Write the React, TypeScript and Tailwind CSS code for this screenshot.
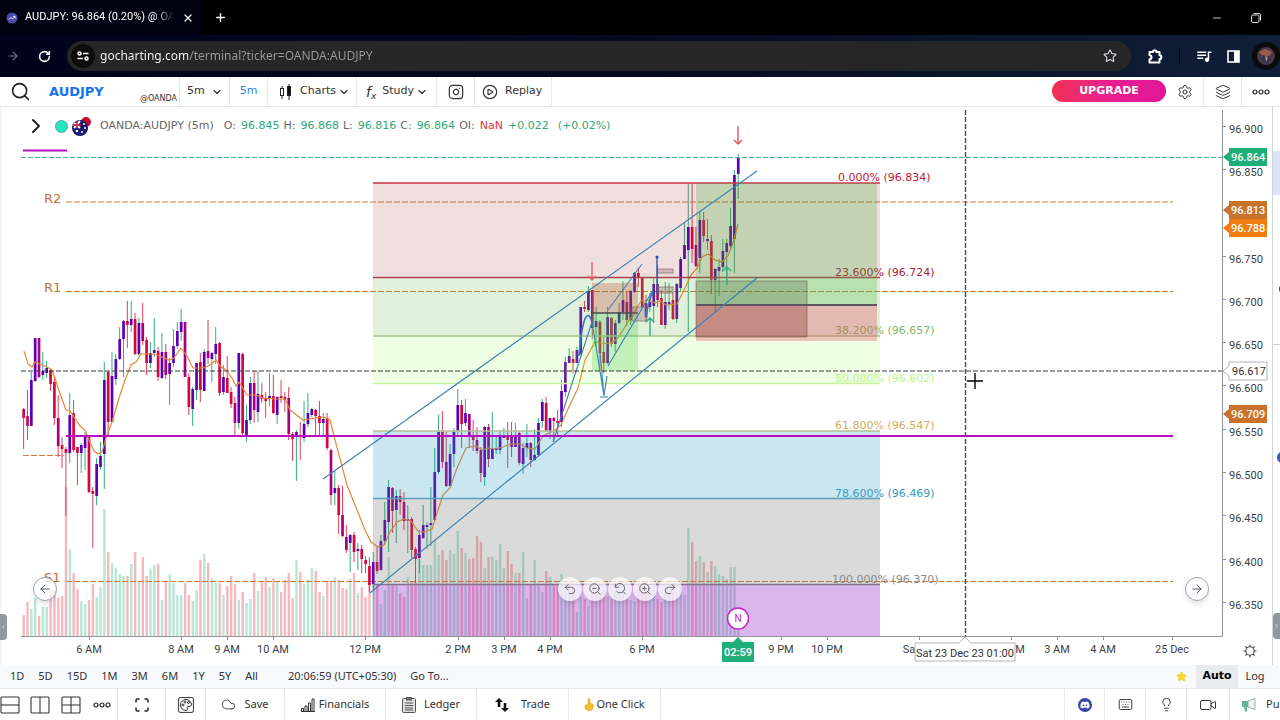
import {
  ArrowLeft,
  ArrowRight,
  ChevronDown,
  ChevronLeft,
  ChevronRight,
  CirclePlay,
  Cloud,
  Instagram,
  Keyboard,
  Layers,
  Lightbulb,
  Minus,
  Plus,
  Redo2,
  RotateCw,
  Search,
  Settings,
  Star,
  Undo2,
  Video,
  X,
  ZoomIn,
  ZoomOut,
} from "lucide-react";
import { FaDiscord } from "react-icons/fa";
import { MdQueueMusic } from "react-icons/md";

// kind, body top, body bottom, high, low, volume top
// u = up candle, d = down candle, m = weak down candle
type Candle = [string, number, number, number, number, number];

const candles: Candle[] = [
  ["d", 409, 418, 408, 449, 615], ["d", 416, 426, 390, 440, 602], ["u", 380, 426, 372, 426, 609],
  ["u", 338, 381, 338, 382, 598], ["m", 338, 377, 338, 378, 616], ["u", 371, 375, 352, 380, 607],
  ["u", 368, 373, 361, 378, 607], ["d", 370, 384, 369, 391, 590], ["d", 382, 418, 377, 425, 590],
  ["m", 418, 446, 395, 457, 598], ["d", 445, 449, 437, 468, 596], ["d", 449, 453, 447, 516, 487],
  ["u", 415, 453, 393, 463, 549], ["d", 413, 450, 400, 452, 573], ["d", 447, 453, 447, 485, 589],
  ["u", 445, 453, 443, 473, 601], ["u", 437, 448, 432, 470, 604], ["d", 435, 492, 435, 493, 600],
  ["d", 491, 494, 487, 548, 584], ["u", 464, 496, 458, 505, 597], ["u", 456, 467, 442, 470, 587],
  ["u", 380, 454, 362, 489, 509], ["d", 372, 422, 371, 435, 552], ["u", 376, 422, 352, 422, 563],
  ["u", 359, 379, 354, 385, 568], ["u", 339, 359, 327, 360, 574], ["u", 321, 339, 320, 377, 576],
  ["d", 321, 325, 301, 348, 576], ["u", 319, 325, 301, 332, 564], ["d", 319, 354, 313, 355, 552],
  ["u", 323, 354, 318, 356, 582], ["m", 323, 341, 303, 345, 557], ["d", 340, 363, 337, 375, 576],
  ["u", 353, 363, 342, 368, 569], ["u", 350, 353, 318, 357, 565], ["d", 351, 377, 347, 381, 564],
  ["u", 352, 378, 333, 379, 600], ["m", 352, 375, 344, 379, 581], ["u", 363, 374, 358, 405, 574],
  ["u", 346, 363, 329, 367, 583], ["u", 331, 346, 322, 349, 595], ["u", 322, 332, 309, 341, 595],
  ["m", 322, 377, 322, 377, 583], ["d", 377, 407, 373, 415, 595], ["u", 389, 409, 387, 426, 601],
  ["u", 363, 390, 363, 400, 590], ["d", 362, 390, 353, 402, 560], ["u", 352, 391, 349, 391, 554],
  ["m", 351, 358, 320, 364, 563], ["u", 353, 359, 352, 382, 578], ["u", 344, 354, 327, 364, 583],
  ["d", 343, 393, 342, 396, 583], ["u", 377, 392, 365, 395, 595], ["d", 378, 393, 356, 393, 586],
  ["d", 392, 404, 387, 408, 576], ["m", 403, 423, 397, 435, 584], ["u", 353, 423, 353, 429, 600],
  ["d", 354, 433, 353, 435, 592], ["u", 420, 436, 405, 442, 603], ["u", 383, 420, 377, 424, 599],
  ["m", 383, 410, 371, 423, 573], ["u", 394, 412, 371, 422, 591], ["d", 395, 399, 383, 403, 582],
  ["d", 398, 401, 392, 418, 577], ["u", 396, 398, 373, 406, 587], ["d", 396, 413, 375, 414, 578],
  ["u", 397, 415, 396, 424, 581], ["d", 396, 398, 380, 403, 592], ["d", 397, 400, 392, 412, 580],
  ["m", 398, 434, 387, 440, 573], ["d", 434, 439, 432, 461, 598], ["u", 432, 437, 430, 481, 560],
  ["d", 435, 437, 422, 460, 572], ["u", 424, 438, 401, 442, 584], ["u", 413, 424, 393, 427, 580],
  ["u", 409, 415, 408, 417, 568], ["d", 410, 416, 409, 435, 571], ["d", 416, 423, 401, 435, 592],
  ["u", 419, 423, 413, 437, 596], ["d", 418, 448, 413, 450, 581], ["m", 450, 495, 449, 505, 581],
  ["u", 488, 493, 470, 505, 577], ["d", 488, 515, 485, 534, 580], ["m", 515, 536, 486, 537, 588],
  ["m", 537, 550, 525, 553, 589], ["u", 535, 543, 534, 572, 579], ["d", 535, 552, 532, 562, 573],
  ["u", 549, 551, 543, 570, 593], ["d", 549, 559, 545, 573, 587], ["d", 560, 564, 556, 573, 597],
  ["d", 566, 585, 557, 592, 580], ["u", 562, 584, 552, 589, 583], ["d", 562, 571, 547, 574, 584],
  ["u", 541, 570, 535, 571, 604], ["u", 520, 541, 502, 545, 590], ["u", 487, 522, 480, 552, 557],
  ["m", 488, 511, 487, 533, 584], ["u", 496, 510, 490, 543, 584], ["d", 496, 502, 489, 515, 593],
  ["m", 502, 521, 492, 530, 597], ["u", 519, 521, 505, 553, 577], ["d", 519, 550, 517, 558, 582],
  ["d", 549, 559, 547, 583, 582], ["u", 535, 558, 530, 573, 560], ["u", 525, 538, 505, 539, 565],
  ["u", 525, 527, 522, 549, 565], ["u", 523, 525, 487, 546, 565], ["u", 472, 520, 448, 521, 540],
  ["u", 432, 472, 415, 474, 555], ["d", 432, 462, 411, 468, 550], ["m", 462, 486, 432, 487, 560],
  ["u", 454, 486, 444, 487, 550], ["u", 432, 454, 428, 467, 554], ["u", 405, 431, 389, 437, 531],
  ["d", 405, 424, 400, 448, 548], ["u", 413, 423, 399, 426, 553], ["m", 414, 437, 414, 447, 559],
  ["d", 437, 440, 420, 451, 558], ["m", 440, 451, 427, 454, 536], ["m", 450, 473, 447, 482, 542],
  ["u", 427, 477, 426, 486, 568], ["m", 427, 459, 424, 467, 557], ["u", 449, 459, 412, 459, 557],
  ["u", 448, 450, 437, 454, 560], ["u", 437, 450, 431, 454, 544], ["u", 436, 438, 428, 438, 568],
  ["d", 436, 440, 422, 468, 551], ["m", 436, 447, 422, 457, 564], ["u", 436, 447, 423, 447, 573],
  ["m", 433, 463, 432, 465, 573], ["u", 448, 464, 443, 474, 552], ["u", 443, 448, 424, 457, 598],
  ["m", 443, 460, 442, 467, 584], ["u", 455, 460, 429, 461, 560], ["u", 423, 455, 418, 456, 583],
  ["u", 402, 421, 399, 428, 592], ["d", 403, 431, 397, 432, 571], ["u", 418, 432, 418, 439, 577],
  ["d", 418, 421, 417, 442, 585], ["d", 421, 423, 410, 435, 585], ["u", 391, 422, 380, 427, 574],
  ["u", 362, 392, 357, 397, 585], ["u", 356, 363, 348, 363, 587], ["d", 359, 363, 351, 373, 588],
  ["u", 350, 363, 347, 363, 612], ["u", 307, 354, 307, 355, 597], ["d", 307, 309, 301, 312, 599],
  ["u", 291, 310, 286, 312, 606], ["m", 290, 328, 290, 339, 590], ["u", 321, 327, 307, 347, 590],
  ["d", 322, 353, 320, 370, 593], ["d", 352, 363, 337, 373, 590], ["u", 317, 363, 307, 364, 597],
  ["d", 318, 344, 317, 347, 599], ["u", 323, 344, 320, 352, 590], ["u", 312, 323, 303, 324, 590],
  ["u", 300, 312, 281, 320, 590], ["m", 302, 320, 292, 326, 599], ["u", 291, 320, 290, 325, 600],
  ["u", 273, 292, 272, 293, 601], ["d", 273, 278, 268, 287, 590], ["d", 277, 307, 277, 308, 588],
  ["m", 303, 317, 295, 322, 590], ["u", 302, 307, 293, 312, 590], ["u", 284, 306, 277, 323, 590],
  ["m", 284, 300, 265, 307, 599], ["d", 298, 325, 290, 325, 602], ["u", 302, 325, 282, 329, 590],
  ["u", 302, 304, 283, 310, 590], ["d", 300, 319, 292, 320, 592], ["u", 284, 319, 283, 323, 593],
  ["u", 259, 288, 257, 292, 587], ["u", 245, 259, 223, 259, 595], ["u", 227, 250, 184, 332, 528],
  ["d", 227, 249, 184, 263, 542], ["m", 245, 266, 227, 267, 561], ["u", 220, 258, 211, 273, 556],
  ["d", 220, 236, 212, 242, 562], ["u", 239, 241, 219, 250, 572], ["d", 241, 280, 235, 294, 561],
  ["u", 269, 280, 268, 312, 566], ["u", 267, 271, 259, 296, 574], ["u", 251, 267, 239, 272, 576],
  ["u", 243, 252, 239, 284, 579], ["u", 226, 246, 208, 249, 567], ["u", 175, 239, 170, 273, 567],
  ["u", 157, 174, 154, 199, 620],
];

const average =
  "24,351 28,364 32,367 35,362 40,364 47,367 52,370 55,378 58,388 66,410 70,411 76,420 80,426 85,430 89,440 94,451 98,454 102,452 106,438 112,422 120,395 125,380 131,365 136,362 141,354 151,354 157,355 162,357 169,360 174,358 181,348 187,356 193,368 204,368 210,365 216,360 220,366 226,370 232,378 236,386 239,382 247,395 256,395 263,398 275,399 285,399 290,410 303,420 315,418 324,417 330,420 335,440 347,485 357,510 365,530 371,542 378,547 384,545 390,532 397,522 404,519 411,521 418,531 424,532 432,529 438,510 443,495 450,488 457,468 466,448 476,446 482,450 488,448 495,449 503,447 510,444 520,444 527,448 535,449 543,436 555,430 561,425 568,409 578,388 585,360 595,342 601,343 610,344 618,338 626,325 633,315 641,301 648,300 655,303 660,301 666,305 677,304 685,288 691,275 697,268 702,257 708,254 715,260 722,262 728,256 734,240 738,224";

const bodyColor: Record<string, string> = { u: "#5b00b5", d: "#d4083f", m: "#a8007c" };

const prices = [
  { y: 129, label: "96.900" },
  { y: 172, label: "96.850" },
  { y: 259, label: "96.750" },
  { y: 302, label: "96.700" },
  { y: 345, label: "96.650" },
  { y: 388, label: "96.600" },
  { y: 432, label: "96.550" },
  { y: 475, label: "96.500" },
  { y: 518, label: "96.450" },
  { y: 562, label: "96.400" },
  { y: 605, label: "96.350" },
];

// labelX is set where the hover date leaves only part of a label showing
const times = [
  { x: 89, label: "6 AM" },
  { x: 181, label: "8 AM" },
  { x: 227, label: "9 AM" },
  { x: 273, label: "10 AM" },
  { x: 365, label: "12 PM" },
  { x: 458, label: "2 PM" },
  { x: 504, label: "3 PM" },
  { x: 550, label: "4 PM" },
  { x: 642, label: "6 PM" },
  { x: 781, label: "9 PM" },
  { x: 827, label: "10 PM" },
  { x: 919, label: "Sa", labelX: 909 },
  { x: 1011, label: "M", labelX: 1020 },
  { x: 1057, label: "3 AM" },
  { x: 1103, label: "4 AM" },
  { x: 1172, label: "25 Dec" },
];

const fibs = [
  { y: 183, x: 838, text: "0.000% (96.834)", color: "#c01838", line: "#c83048" },
  { y: 277.5, x: 835, text: "23.600% (96.724)", color: "#a3263a", line: "#b04050" },
  { y: 336, x: 835, text: "38.200% (96.657)", color: "#86b568", line: "#a3c490" },
  { y: 383.5, x: 835, text: "50.000% (96.602)", color: "#bdf58a", line: "#c4f59a" },
  { y: 431, x: 835, text: "61.800% (96.547)", color: "#cfae5e", line: "#b9bf94" },
  { y: 498.5, x: 835, text: "78.600% (96.469)", color: "#3a98c4", line: "#5aa0c0" },
  { y: 584.5, x: 832, text: "100.000% (96.370)", color: "#8b8b8b", line: "#86708e" },
];

const tags = [
  { y: 157, label: "96.864", fill: "#1eae78" },
  { y: 210, label: "96.813", fill: "#c9722c" },
  { y: 228, label: "96.788", fill: "#f07c12" },
  { y: 414, label: "96.709", fill: "#c9722c" },
];

function Arrow({ x, y, dir, color }: { x: number; y: number; dir: number; color: string }) {
  return (
    <path
      d={`M${x} ${y} V${y - 18 * dir} M${x - 4} ${y - 4 * dir} L${x} ${y} L${x + 4} ${y - 4 * dir}`}
      fill="none"
      stroke={color}
      strokeWidth="1.4"
    />
  );
}

function Chart() {
  return (
    <svg viewBox="0 107 1272 558" className="block h-auto w-full font-['Roboto',sans-serif]">
      {/* volume */}
      {candles.map((c, i) => (
        <rect
          key={i}
          x={22.5 + i * 3.842}
          y={c[5]}
          width="2.4"
          height={636 - c[5]}
          fill={c[0] === "u" ? "#b9e6d4" : "#f6b8be"}
        />
      ))}
      <path d="M66 202H1173M66 291.5H1173M66 581.5H1173M23 455.5H64" stroke="#d07a3a" strokeWidth="1.2" strokeDasharray="6 2" />
      <g fontSize="13" fill="#bf7238" className="font-['DejaVu_Sans',sans-serif]">
        <text x="44" y="203">R2</text>
        <text x="44" y="292">R1</text>
        <text x="44" y="582">S1</text>
      </g>

      {/* candles */}
      {candles.map(([kind, top, bottom, high, low], i) => {
        const x = 23.6 + i * 3.842;
        return (
          <g key={i}>
            <rect x={x - 0.5} y={high} width="1" height={low - high} fill={kind === "u" ? "#35ae82" : "#e0405a"} />
            <rect x={x - 1.3} y={top} width="2.7" height={bottom - top} fill={bodyColor[kind]} />
          </g>
        );
      })}
      <polyline points={average} fill="none" stroke="#e58a3a" strokeWidth="1.2" />

      {/* fib zones */}
      <rect x="373" y="183" width="507" height="94" fill="#a02830" fillOpacity="0.15" />
      <rect x="373" y="277" width="507" height="59" fill="#60b040" fillOpacity="0.19" />
      <rect x="373" y="336" width="507" height="47" fill="#90ff40" fillOpacity="0.14" />
      <rect x="373" y="431" width="507" height="67" fill="#2098c0" fillOpacity="0.24" />
      <rect x="373" y="498" width="507" height="86" fill="#707070" fillOpacity="0.26" />
      <rect x="373" y="584" width="507" height="52" fill="#9020c8" fillOpacity="0.33" />
      {fibs.map((f) => (
        <g key={f.text}>
          <path d={`M373 ${f.y}H880`} stroke={f.line} strokeWidth="1.3" />
          <text x={f.x} y={Math.round(f.y) - 2} fontSize="11" fill={f.color} className="font-['DejaVu_Sans',sans-serif]">
            {f.text}
          </text>
        </g>
      ))}

      {/* long position boxes */}
      <rect x="592" y="283" width="46" height="30" fill="#c04030" fillOpacity="0.28" />
      <rect x="592" y="313" width="46" height="58" fill="#30c030" fillOpacity="0.24" />
      <path d="M592 313H638" stroke="#4a4a55" strokeWidth="1.6" />
      <rect x="696" y="183" width="181" height="122" fill="#40b030" fillOpacity="0.25" />
      <rect x="696" y="305" width="181" height="36" fill="#e84050" fillOpacity="0.3" />
      <rect x="696" y="281" width="111" height="24" fill="#4a5c3c" fillOpacity="0.27" />
      <rect x="696" y="305" width="111" height="32" fill="#8a2828" fillOpacity="0.32" />
      <rect x="696" y="281" width="111" height="56" fill="none" stroke="#604a4a" strokeOpacity="0.5" />
      <path d="M696 305H877" stroke="#5c5460" strokeWidth="2" />
      <g fill="#906060" fillOpacity="0.3" stroke="#806a6a" strokeOpacity="0.7">
        <rect x="657" y="269" width="16" height="4" />
        <rect x="657" y="287" width="16" height="6" />
        <rect x="632" y="307" width="15" height="14" />
      </g>

      {/* trend lines */}
      <g fill="none" stroke="#3d82b0" strokeWidth="1.1">
        <path d="M323 479L757 171M370 593L757 278" />
        <path d="M553 442L592 322L604 396L607 376M600 397H608M604 396L599 340M608 310L642 264M608 366L653 290" />
        <path d="M579 356C582 320 587 306 592 322M646 316C648 306 650 296 653 292" stroke="#3576d0" strokeWidth="1.6" />
      </g>
      <path d="M657 256V294" stroke="#2855a8" strokeWidth="1.3" />
      <circle cx="657" cy="257" r="1.6" fill="#2855a8" />
      <Arrow x={738} y={144} dir={1} color="#e25560" />
      <Arrow x={592} y={280} dir={1} color="#e86068" />
      <Arrow x={650} y={318} dir={-1} color="#2fae8c" />
      <Arrow x={727} y={267} dir={-1} color="#2fb888" />

      <path d="M66 436H1173M23 150.5H67" stroke="#b80ec0" strokeWidth="2" />
      <path d="M21 157.5H1223" stroke="#48b58c" strokeWidth="1.2" strokeDasharray="5 2" />
      <path d="M21 371H1223" stroke="#3c3c3c" strokeWidth="1.2" strokeDasharray="5 2" />
      <path d="M965.5 110V636" stroke="#4a4a4a" strokeWidth="1.4" strokeDasharray="5 2" />

      {/* axes */}
      <path d="M21 636.5H1222.5V110" fill="none" stroke="#8e9398" />
      <g fontSize="11" fill="#3c3f44">
        {prices.map((p) => (
          <g key={p.label}>
            <path d={`M1222 ${p.y - 2.5}h4`} stroke="#8e9398" />
            <text x="1229" y={p.y + 4}>{p.label}</text>
          </g>
        ))}
        {times.map((t) => (
          <g key={t.x}>
            <path d={`M${t.x + 0.5} 636v4`} stroke="#8e9398" />
            <text x={t.labelX ?? t.x} y="653" textAnchor="middle">{t.label}</text>
          </g>
        ))}
      </g>
      {tags.map((t) => (
        <g key={t.label}>
          <path d={`M1223 ${t.y}l6 -5v-4h38v18h-38v-4z`} fill={t.fill} />
          <text x="1231" y={t.y + 4} fontSize="11" fontWeight="500" fill="#fff">{t.label}</text>
        </g>
      ))}
      <path d="M1223 371l6 -5v-4h38v18h-38v-4z" fill="#fff" stroke="#b4b4b4" />
      <text x="1232" y="375" fontSize="11" fill="#333">96.617</text>

      <path d="M738 637l5 5h11v20h-32v-20h11z" fill="#1eae78" />
      <text x="738" y="656" textAnchor="middle" fontSize="11" fontWeight="600" fill="#fff">02:59</text>
      <path d="M965 637l6 6h44v18h-100v-18h44z" fill="#fff" stroke="#b4b4b4" />
      <text x="965" y="657" textAnchor="middle" fontSize="11" fill="#333">Sat 23 Dec 23 01:00</text>
      <circle cx="738" cy="618.5" r="10.5" fill="#fff" stroke="#c424c4" strokeWidth="1.4" />
      <text x="738" y="622" textAnchor="middle" fontSize="10" fill="#c424c4">N</text>

      <path d="M967 381H983M975 373V389" stroke="#000" strokeWidth="1.4" />
    </svg>
  );
}

function Flag() {
  return (
    <svg viewBox="0 0 20 20" className="h-5 w-5">
      <circle cx="14" cy="6" r="5" fill="#c01030" />
      <circle cx="8" cy="12" r="8" fill="#161a72" />
      <path d="M2 7L8 12M8 5L2 12" stroke="#fff" strokeWidth="2" />
      <path d="M5 5V12M1 9H9" stroke="#d81e3c" strokeWidth="1.4" />
      <g fill="#fff">
        <circle cx="12" cy="8" r="1" />
        <circle cx="13" cy="12" r="1" />
        <circle cx="10" cy="16" r="1" />
        <circle cx="5" cy="15" r="1.3" />
      </g>
    </svg>
  );
}

function Dots() {
  return (
    <svg viewBox="0 0 18 6" className="h-[6px] w-[18px]" fill="none" stroke="#222" strokeWidth="1.2">
      <circle cx="3" cy="3" r="2" />
      <circle cx="9" cy="3" r="2" />
      <circle cx="15" cy="3" r="2" />
    </svg>
  );
}

function LayoutIcon({ d }: { d: string }) {
  return (
    <svg viewBox="0 0 20 18" className="h-[18px] w-5 shrink-0" fill="none" stroke="#333" strokeWidth="1.1">
      <rect x="1" y="1" width="18" height="16" rx="1" />
      <path d={d} />
    </svg>
  );
}

function BrowserBar() {
  return (
    <header className="text-white font-['Noto_Sans',sans-serif]">
      <div className="flex h-[35px] items-center bg-black">
        <div className="flex h-full w-[202px] items-center bg-[#010110] pl-[6px]">
          <svg viewBox="0 0 12 12" className="h-3 w-3 shrink-0">
            <circle cx="6" cy="6" r="5.5" fill="#4a4aa8" />
            <path d="M3 7.5L5 5.5L6.5 7L9 4.5M7 4.3H9V6.3" fill="none" stroke="#fff" strokeWidth="0.9" />
          </svg>
          <span className="ml-[7px] w-[149px] overflow-hidden whitespace-nowrap text-[11px] font-['Roboto',sans-serif] [mask-image:linear-gradient(to_right,black_88%,transparent)]">
            AUDJPY: 96.864 (0.20%) @ OAN
          </span>
          <button aria-label="Close tab" className="ml-2">
            <X size={12} strokeWidth={2.5} />
          </button>
        </div>
        <button aria-label="New tab" className="ml-3">
          <Plus size={13} strokeWidth={2.5} />
        </button>
        <button aria-label="Minimize" className="ml-auto">
          <Minus size={12} strokeWidth={1.5} />
        </button>
        <button aria-label="Restore" className="ml-7 mr-[19px]">
          <svg viewBox="0 0 10 10" className="h-[10px] w-[10px]" fill="none" stroke="#ddd">
            <rect x="0.5" y="2" width="7.5" height="7.5" rx="1.5" />
            <path d="M2.5 0.5H8Q9.5 0.5 9.5 2V7.5" />
          </svg>
        </button>
      </div>
      <div className="flex h-[42px] items-center bg-linear-to-r from-[#02021c] via-[#050a20] to-[#101f38]">
        <ArrowRight size={14} className="ml-[6px] text-gray-500" />
        <button aria-label="Reload" className="ml-[18px]">
          <RotateCw size={13} strokeWidth={2.8} />
        </button>
        <div className="ml-4 flex h-[30px] flex-1 items-center rounded-full bg-[#262627] pl-[4px] pr-[14px]">
          <span className="flex h-6 w-6 items-center justify-center rounded-full bg-[#0c0c0c]">
            <svg viewBox="0 0 12 10" className="h-[10px] w-3" fill="none" stroke="#fff" strokeWidth="1.5">
              <circle cx="2.5" cy="2.5" r="1.5" />
              <circle cx="9.5" cy="7.5" r="1.5" />
              <path d="M6 2.5H11.5M0.5 7.5H6" />
            </svg>
          </span>
          <input
            aria-label="Address"
            className="ml-[5px] min-w-0 flex-1 bg-[linear-gradient(to_right,#ffffff_88px,#9b9b9b_88px)] bg-clip-text text-xs text-transparent outline-none"
            defaultValue="gocharting.com/terminal?ticker=OANDA:AUDJPY"
          />
          <Star size={14} className="text-gray-300" />
        </div>
        <button aria-label="Extensions" className="ml-[17px]">
          <svg viewBox="0 0 15 15" className="h-[15px] w-[15px]" fill="none" stroke="#fff" strokeWidth="2" strokeLinejoin="round">
            <path d="M1.500 3H5A1.700 1.700 0 0 1 8.400 3H11.500V6.300A1.700 1.700 0 0 1 11.500 10V13.500H1.500V10.300A2 2 0 0 0 1.500 6.300Z" />
          </svg>
        </button>
        <span className="ml-4 h-4 w-px bg-black" />
        <MdQueueMusic size={18} className="ml-[15px]" />
        <svg viewBox="0 0 13 13" className="ml-[14px] h-[13px] w-[13px]">
          <rect x="1" y="1" width="11" height="11" fill="none" stroke="#fff" strokeWidth="1.6" />
          <rect x="7" y="1" width="5" height="11" fill="#fff" />
        </svg>
        <span className="ml-3 flex h-[28px] w-[28px] shrink-0 items-center justify-center rounded-full bg-[#0b0b0d]">
          <svg viewBox="0 0 18 18" className="h-[18px] w-[18px]">
            <circle cx="9" cy="9" r="9" fill="#4b3a45" />
            <path d="M2 5L8 2L15 5L12 9L5 8Z" fill="#9a5c4c" />
            <path d="M4 10L9 9L14 11L11 16L7 15Z" fill="#28305e" />
            <path d="M8 8L11 11L9 15Z" fill="#c49060" />
          </svg>
        </span>
      </div>
    </header>
  );
}

function Toolbar() {
  return (
    <nav className="flex h-[30px] items-stretch border-b border-gray-200 bg-white text-[11px] text-[#333] font-['DejaVu_Sans',sans-serif]">
      <button aria-label="Search" className="ml-[2px] w-[37px] pl-2">
        <Search size={21} strokeWidth={1.8} className="text-[#222]" />
      </button>
      <div className="flex w-[141px] items-center justify-between border-r border-gray-200 pl-[10px] pr-[2px]">
        <button className="text-[13px] font-bold text-[#1673f0]">AUDJPY</button>
        <span className="mt-[14px] text-[8px]">@OANDA</span>
      </div>
      <label className="relative flex w-[50px] items-center border-r border-gray-200 pl-[7px]">
        <select aria-label="Interval" className="w-full appearance-none bg-transparent outline-none">
          <option>5m</option>
          <option>15m</option>
        </select>
        <ChevronDown size={12} strokeWidth={2.5} className="absolute right-[6px]" />
      </label>
      <button className="w-[38px] border-r border-gray-200 text-[#2f7fe8]">5m</button>
      <button className="flex w-[89px] items-center border-r border-gray-200 pl-3">
        <svg viewBox="0 0 12 16" className="h-4 w-3" fill="none" stroke="#222">
          <rect x="0.5" y="4.5" width="3" height="7" />
          <path d="M2 2V4.5M2 11.5V15M9 0V16" />
          <rect x="7.5" y="2.5" width="3" height="9" fill="#111" />
        </svg>
        <span className="ml-2">Charts</span>
        <ChevronDown size={12} strokeWidth={2.5} className="ml-[2px] shrink-0" />
      </button>
      <button className="flex w-[80px] items-center border-r border-gray-200 pl-[9px]">
        <span className="text-[14px] italic leading-none">
          f<sub className="text-[9px]">x</sub>
        </span>
        <span className="ml-[6px]">Study</span>
        <ChevronDown size={12} strokeWidth={2.5} className="ml-[2px] shrink-0" />
      </button>
      <button aria-label="Snapshot" className="flex w-[38px] items-center justify-center border-r border-gray-200">
        <Instagram size={16} strokeWidth={1.8} />
      </button>
      <button className="flex w-[77px] items-center border-r border-gray-200 pl-[7px]">
        <CirclePlay size={16} strokeWidth={1.8} />
        <span className="ml-[7px]">Replay</span>
      </button>
      <button className="ml-auto mt-[3px] h-[22px] w-[114px] rounded-full bg-linear-to-r from-[#f03050] via-[#e81e90] to-[#e01898] font-bold text-white">
        UPGRADE
      </button>
      <button aria-label="Settings" className="flex w-[38px] items-center justify-center border-r border-gray-200">
        <Settings size={16} strokeWidth={1.5} />
      </button>
      <button aria-label="Layers" className="flex w-[38px] items-center justify-center border-r border-gray-200">
        <Layers size={16} strokeWidth={1.5} />
      </button>
      <button aria-label="More" className="flex w-[38px] items-center justify-center">
        <Dots />
      </button>
    </nav>
  );
}

const legend = [
  { name: "O:", value: "96.845" },
  { name: "H:", value: "96.868" },
  { name: "L:", value: "96.816" },
  { name: "C:", value: "96.864" },
];

const roundButton =
  "flex h-6 w-6 items-center justify-center rounded-full border border-gray-400 bg-white/70 text-gray-700 shadow-md";
const zoomButton = "flex h-6 w-6 items-center justify-center rounded-full bg-white/70 text-[#555] shadow-md";

function ChartPane() {
  return (
    <section className="relative min-w-0 flex-1 border-l-2 border-gray-100 bg-white">
      <div className="-ml-[2px]">
        <Chart />
      </div>
      <div className="absolute left-[22px] top-[7px] flex items-center whitespace-nowrap text-[11px] text-[#666] font-['DejaVu_Sans',sans-serif]">
        <ChevronRight size={24} className="text-[#222]" />
        <span className="ml-[7px] mr-1 h-[13px] w-[13px] rounded-full border border-[#3fae9a] bg-[#25e6c0]" />
        <Flag />
        <span className="ml-2 mr-[10px]">OANDA:AUDJPY (5m)</span>
        {legend.map((l) => (
          <span key={l.name} className="mr-1 flex gap-[5px]">
            {l.name} <span className="text-[#2fa878]">{l.value}</span>
          </span>
        ))}
        <span className="flex gap-[5px]">
          OI: <span className="text-[#dc3545]">NaN</span>
        </span>
        <span className="ml-[5px] text-[#2fa878]">+0.022</span>
        <span className="ml-[9px] text-[#2fa878]">(+0.02%)</span>
      </div>

      <button aria-label="Scroll left" className={`absolute bottom-[64px] left-[31px] ${roundButton}`}>
        <ArrowLeft size={14} strokeWidth={1.5} />
      </button>
      <button aria-label="Scroll right" className={`absolute bottom-[64px] right-[63px] ${roundButton}`}>
        <ArrowRight size={14} strokeWidth={1.5} />
      </button>
      <div className="absolute bottom-[64px] left-[43.8%] flex gap-[1px]">
        <button aria-label="Undo" className={zoomButton}><Undo2 size={14} strokeWidth={1.5} /></button>
        <button aria-label="Zoom out" className={zoomButton}><ZoomOut size={14} strokeWidth={1.5} /></button>
        <button aria-label="Reset zoom" className={zoomButton}>
          <svg viewBox="0 0 24 24" width="14" height="14" fill="none" stroke="currentColor" strokeWidth="1.5">
            <path d="M4 3v6h6M4 9a8 8 0 1 1 2 7M17 16l5 5" />
          </svg>
        </button>
        <button aria-label="Zoom in" className={zoomButton}><ZoomIn size={14} strokeWidth={1.5} /></button>
        <button aria-label="Redo" className={zoomButton}><Redo2 size={14} strokeWidth={1.5} /></button>
      </div>
      <button aria-label="Axis settings" className="absolute bottom-[7px] right-[15px]">
        <svg viewBox="0 0 14 14" className="h-[14px] w-[14px]" fill="none" stroke="#444" strokeWidth="1.1">
          <circle cx="7" cy="7" r="4.2" />
          <path d="M7 0.5V2.8M7 11.2V13.5M0.5 7H2.8M11.2 7H13.5M2.4 2.4L4 4M10 10L11.6 11.6M2.4 11.6L4 10M10 4L11.6 2.4" />
        </svg>
      </button>
      <button aria-label="Open left panel" className="absolute -left-[2px] bottom-[25px] flex h-[26px] w-[7px] items-center rounded-r bg-[#8f999a] text-white">
        <ChevronLeft size={8} />
      </button>
    </section>
  );
}

function SideRail() {
  return (
    <aside className="flex w-2 shrink-0 flex-col overflow-hidden border-l border-gray-300 bg-white">
      <div className="mt-[44px] h-[44px] bg-[#dfe3f6]" />
      <div className="flex h-[150px] items-center border-b border-gray-300">
        <span className="ml-[6px] mt-[38px] h-2 w-2 shrink-0 rounded-full bg-[#444]" />
      </div>
      <span className="ml-[4px] mt-[107px] h-[11px] w-[11px] shrink-0 rounded-full bg-[#3f55b8]" />
      <button aria-label="Open right panel" className="mb-[26px] mt-auto flex h-[26px] w-full items-center rounded-l bg-[#8f999a] text-white">
        <ChevronRight size={8} />
      </button>
    </aside>
  );
}

const ranges = ["1D", "5D", "15D", "1M", "3M", "6M", "1Y", "5Y", "All"];

function RangeBar() {
  return (
    <div className="flex h-[23px] items-center bg-[#f8f9fc] pl-[10px] text-[11px] text-[#333] font-['Noto_Sans',sans-serif]">
      <div className="flex gap-[14px]">
        {ranges.map((r) => (
          <button key={r}>{r}</button>
        ))}
      </div>
      <span className="ml-[30px]">20:06:59 (UTC+05:30)</span>
      <button className="ml-[14px]">Go To...</button>
      <Star size={11} fill="#f2dc2e" className="ml-auto mr-[9px] text-[#e8cc20]" />
      <button className="h-full w-[42px] bg-[#e8eaed] font-bold text-black font-['DejaVu_Sans',sans-serif]">Auto</button>
      <button className="mr-[8px] w-[34px]">Log</button>
    </div>
  );
}

const cell = "flex shrink-0 items-center justify-center border-r border-gray-200";

function BottomBar() {
  return (
    <footer className="flex h-8 items-stretch overflow-hidden border-t border-gray-200 bg-white text-[11px] text-[#333] font-['Noto_Sans',sans-serif]">
      <div className="flex w-[118px] shrink-0 items-center border-r border-gray-200">
        <button aria-label="Two rows"><LayoutIcon d="M1 9H19" /></button>
        <button aria-label="Two columns" className="ml-[10px]"><LayoutIcon d="M10 1V17" /></button>
        <button aria-label="Grid" className="ml-[11px]"><LayoutIcon d="M1 9H19M10 1V17" /></button>
        <button aria-label="More layouts" className="ml-[12px]"><Dots /></button>
      </div>
      <button aria-label="Full screen" className={`${cell} w-[48px]`}>
        <svg viewBox="0 0 14 14" className="h-[14px] w-[14px]" fill="none" stroke="#222" strokeWidth="1.5">
          <path d="M1 4.5V2.5Q1 1 2.500 1H4.500M9.500 1H11.500Q13 1 13 2.500V4.500M13 9.500V11.500Q13 13 11.500 13H9.500M4.500 13H2.500Q1 13 1 11.500V9.500" />
        </svg>
      </button>
      <button aria-label="Theme" className={`${cell} w-[40px]`}>
        <svg viewBox="0 0 16 16" className="h-4 w-4" fill="none" stroke="#333">
          <rect x="0.6" y="0.6" width="14.8" height="14.8" rx="1.5" />
          <path d="M8 13.5A5.5 5.5 0 1 1 13.5 8Q13 10 10 9.5Q8 10 9.5 12Q9.5 13.5 8 13.5Z" />
          <circle cx="5" cy="8" r="1" />
          <circle cx="7" cy="5" r="1" />
          <circle cx="10.5" cy="5.5" r="1" />
        </svg>
      </button>
      <button className={`${cell} w-[79px] gap-2`}><Cloud size={15} strokeWidth={1.3} />Save</button>
      <button className={`${cell} w-[101px] gap-1`}>
        <svg viewBox="0 0 14 14" className="h-[14px] w-[14px]" fill="none" stroke="#333">
          <path d="M0.5 13.5V10.5H2.5V13.5M4 13.5V8H6V13.5M7.5 13.5V5H9.5V13.5M11 13.5V1H13V13.5M0 13.5H14" />
        </svg>
        Financials
      </button>
      <button className={`${cell} w-[91px] gap-2`}>
        <svg viewBox="0 0 14 16" className="h-4 w-[14px]" fill="#ddd" stroke="#555">
          <rect x="0.5" y="1.5" width="13" height="14" rx="1" />
          <path d="M3 6H11M3 8.5H11M3 11H11M3 13H11" />
          <rect x="4.5" y="0.5" width="5" height="2.5" fill="#777" />
        </svg>
        Ledger
      </button>
      <button className={`${cell} w-[92px] gap-3`}>
        <svg viewBox="0 0 14 14" className="h-[14px] w-[14px]" fill="#111">
          <path d="M4 0L8 4H5.3V9H2.7V4H0Z" />
          <path d="M10 14L6 10H8.7V5H11.3V10H14Z" />
        </svg>
        Trade
      </button>
      <button className={`${cell} w-[92px] gap-[2px]`}>
        <svg viewBox="0 0 10 14" className="h-[13px] w-[10px]">
          <path d="M4 1Q5.5 0 6 1.5V6H8Q9.5 6.5 9.5 8V10Q9 13.5 6 13.5H4Q1 13 0.5 9.5Q0.5 7 3 7H4Z" fill="#f6bf2c" stroke="#d99a1c" strokeWidth="0.6" />
        </svg>
        One Click
      </button>
      <button aria-label="Discord" className={`${cell} ml-auto w-[41px] border-l`}>
        <span className="flex h-[14px] w-[14px] items-center justify-center rounded-full bg-[#3b47a8] text-white"><FaDiscord size={10} /></span>
      </button>
      <button aria-label="Shortcuts" className={`${cell} w-[41px]`}><Keyboard size={15} strokeWidth={1.5} /></button>
      <button aria-label="Ideas" className={`${cell} w-[41px]`}><Lightbulb size={15} strokeWidth={1.5} /></button>
      <button aria-label="Record" className={`${cell} w-[43px]`}><Video size={18} strokeWidth={1.3} /></button>
      <button className="flex w-[50px] shrink-0 items-center whitespace-nowrap pl-[11px]">
        <svg viewBox="0 0 16 14" className="h-[14px] w-4 shrink-0">
          <path d="M1 3H7V9H1Z" fill="#5fb596" />
          <path d="M7 3L14 0.5V11.5L7 9Z" fill="#eef2f0" stroke="#8a9a94" strokeWidth="0.8" />
          <path d="M3 9H6V13.5H4Z" fill="#5fb596" />
        </svg>
        <span className="ml-[9px]">Publish</span>
      </button>
    </footer>
  );
}

export default function App() {
  return (
    <div className="flex min-h-screen w-full flex-col overflow-hidden bg-white">
      <BrowserBar />
      <Toolbar />
      <main className="flex">
        <ChartPane />
        <SideRail />
      </main>
      <RangeBar />
      <BottomBar />
    </div>
  );
}
